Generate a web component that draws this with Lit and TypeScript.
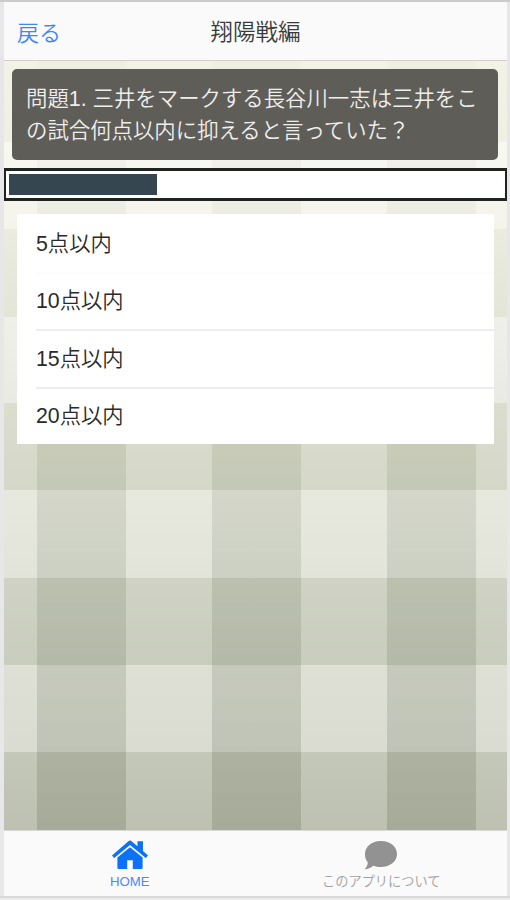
import { LitElement, html, css, svg } from "lit";
import { customElement, property, state } from "lit/decorators.js";

const homeIcon = svg`
  <path d="M17 .8 Q18 0 19 .8 L25.5 6.3 V1.2 H31 V11 L36 15.4 L33.8 18 L18 4.9 L2.2 18 L0 15.4 Z"/>
  <path d="M18 7.2 L30.6 17.6 V28 Q30.6 29 29.6 29 H20.8 V20.3 H15.2 V29 H6.4 Q5.4 29 5.4 28 V17.6 Z"/>`;
const bubbleIcon = svg`
  <path d="M17 1 C26.5 1 33 6.8 33 14 C33 21.5 26 27 17 27 C14 27 11.5 26.6 9.2 25.7 C6.8 27.8 4 29 .5 29.3 C2.6 27.5 3.6 25.2 3.8 22.3 C1.6 20 1 17 1 14 C1 6.8 7.5 1 17 1 Z"/>`;

@customElement("answer-list")
class AnswerList extends LitElement {
  @property({ type: Array }) answers: string[] = [];
  static styles = css`
    :host { display: block; }
    .list { background: #fff; height: 230px; display: grid; grid-template-rows: 60px 57px 58px 55px; }
    .row { margin-left: 19px; display: flex; align-items: center; box-sizing: border-box; border-bottom: 2px solid #ededee; font-size: 21.3px; line-height: 30px; color: #2a2a2a; padding-bottom: 1px; }
    .row:first-child { border-color: #fcfcfc; padding: 2px 0 0; }
    .row:last-child { border-bottom: 0; padding-bottom: 2px; }
  `;
  render() {
    return html`<div class="list">${this.answers.map((a) => html`<div class="row">${a}</div>`)}</div>`;
  }
}

@customElement("tab-item")
class TabItem extends LitElement {
  @property() label = "";
  @property() icon = "home";
  @property({ type: Boolean, reflect: true }) active = false;
  static styles = css`
    :host { flex: 1; display: flex; flex-direction: column; align-items: center; color: #a0a0a0; fill: #929292; }
    :host([active]) { color: #4b8bf2; fill: #0b72f5; }
    svg { display: block; margin-top: 9px; }
    .label { font-size: 13.2px; line-height: 16px; margin-top: 4px; white-space: nowrap; }
  `;
  render() {
    const home = this.icon === "home";
    return html`
      <svg width=${home ? 36 : 34} height="30" viewBox=${home ? "0 0 36 30" : "0 0 34 30"}>${home ? homeIcon : bubbleIcon}</svg>
      <div class="label">${this.label}</div>`;
  }
}

@customElement("app-root")
class AppRoot extends LitElement {
  @state() private remaining = 30;
  static styles = css`
    :host {
      display: flex; flex-direction: column; box-sizing: border-box; height: 900px;
      padding: 2px 3px 4px 4px; background: #e7e7ea;
      background-image: linear-gradient(#cbcbcc 0 2px, transparent 2px 896px, #dadada 896px 898px, #ebebeb 898px);
      font-family: "Liberation Sans", "Noto Sans CJK JP DemiLight", "Noto Sans CJK JP", sans-serif;
      font-weight: 350;
    }
    .bar { height: 59px; box-sizing: border-box; background: #fafafa; border-bottom: 1px solid #d0d0c8; display: grid; grid-template-columns: 1fr auto 1fr; align-items: center; padding: 2px 13px 0; }
    .back { font-size: 22px; line-height: 32px; color: #4285f4; padding-top: 3px; }
    .title { font-size: 22.6px; line-height: 32px; color: #3a3a3a; padding-top: 2px; }
    .plaid {
      position: relative; height: 769px; box-sizing: border-box; padding-top: 8px;
      background: linear-gradient(
        #f2f2e6 0, #efefe2 81px, #f8f8f2 81px, #f4f4eb 168px,
        #ebecdf 168px, #e3e5d6 256px, #eff0e8 256px, #e9ebe2 342px,
        #dbdecd 342px, #d5d8c9 429px, #e7e9df 429px, #e2e4da 517px,
        #cfd2c4 517px, #c9cdbe 604px, #dee0d6 604px, #dadcd1 691px,
        #c4c8b8 691px, #bec1b2 769px);
    }
    .stripes {
      position: absolute; inset: 0;
      background: linear-gradient(rgba(80, 85, 50, 0.02), rgba(74, 80, 52, 0.06) 30%, rgba(68, 76, 42, 0.11) 52%, rgba(58, 72, 38, 0.135) 72%, rgba(50, 62, 36, 0.17));
      -webkit-mask-image: repeating-linear-gradient(90deg, transparent 0 33.3px, #000 33.3px 122px, transparent 122px 174.8px);
      mask-image: repeating-linear-gradient(90deg, transparent 0 33.3px, #000 33.3px 122px, transparent 122px 174.8px);
    }
    .content { position: relative; }
    .question { margin: 0 9px 0 8px; height: 91px; box-sizing: border-box; padding: 14px 0 0 14px; border-radius: 5px; background: #5e5d58; color: #eeeeec; font-size: 21.4px; line-height: 32px; white-space: nowrap; }
    .timer { margin-top: 8px; height: 33px; box-sizing: border-box; border: 2px solid #20231f; border-width: 3px 2px; background: #fff; padding: 3px 3px; }
    .fill { height: 21px; background: #354650; }
    .answers { display: block; margin: 13px 13px 0 13px; }
    .tabs { height: 66px; box-sizing: border-box; border-top: 1px solid #d8d8d4; background: #fafafa; display: flex; }
  `;
  render() {
    return html`
      <header class="bar"><div class="back">戻る</div><div class="title">翔陽戦編</div></header>
      <main class="plaid">
        <div class="stripes"></div>
        <div class="content">
          <div class="question">問題1. 三井をマークする長谷川一志は三井をこ<br />の試合何点以内に抑えると言っていた？</div>
          <div class="timer"><div class="fill" style="width:${this.remaining}%"></div></div>
          <answer-list class="answers" .answers=${["5点以内", "10点以内", "15点以内", "20点以内"]}></answer-list>
        </div>
      </main>
      <nav class="tabs">
        <tab-item label="HOME" icon="home" active></tab-item>
        <tab-item label="このアプリについて" icon="bubble"></tab-item>
      </nav>`;
  }
}
